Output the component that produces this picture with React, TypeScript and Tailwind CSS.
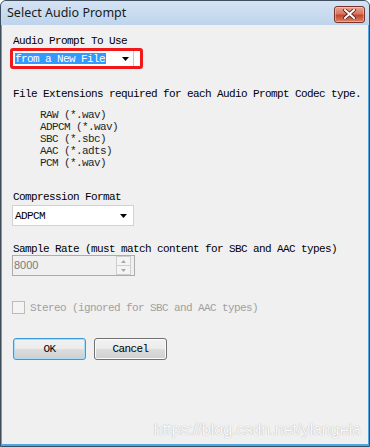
import React from "react";

const mono = "font-['Liberation_Mono',monospace] text-[11px] tracking-[-0.6px] leading-[12px]";

function DownArrow() {
  return (
    <svg width="7" height="4" viewBox="0 0 7 4" className="shrink-0">
      <path d="M0 0h7L3.5 4z" fill="#000" />
    </svg>
  );
}

function CloseButton() {
  return (
    <div className="flex h-[17px] w-[31px] items-center justify-center rounded-[3px] border border-[#7a3328] bg-[linear-gradient(#e8a393_0%,#d77560_45%,#c4452f_55%,#d9826a_100%)] shadow-[inset_0_0_0_1px_rgba(255,255,255,0.35)]">
      <svg width="13" height="10" viewBox="0 0 13 10">
        <path d="M2 1l9 8M11 1L2 9" stroke="#5a1c14" strokeWidth="3.6" strokeLinecap="square" />
        <path d="M2 1l9 8M11 1L2 9" stroke="#fff" strokeWidth="2" strokeLinecap="square" />
      </svg>
    </div>
  );
}

function Button({ label, primary }: { label: string; primary?: boolean }) {
  return (
    <div
      className={`flex h-[22px] w-[73px] items-center justify-center rounded-[3px] border bg-[linear-gradient(#f2f2f2_0%,#ebebeb_50%,#dddddd_50%,#cfcfcf_100%)] text-black ${mono} ${
        primary
          ? "border-[#3c9ad8] shadow-[inset_0_0_0_1px_#a9dcf6]"
          : "border-[#707070] shadow-[inset_0_0_0_1px_#fbfbfb]"
      }`}
    >
      {label}
    </div>
  );
}

export default function App() {
  return (
    <div className="flex h-[447px] w-[370px] flex-col overflow-hidden rounded-t-[6px] border border-[#3f4d5c] bg-[#4ba8e4]">
      {/* title bar */}
      <div className="flex h-[24px] shrink-0 items-center justify-between bg-[linear-gradient(#d4e3f4,#bed4ec)] pl-[6px] pr-[4px]">
        <span className="font-['Noto_Sans',sans-serif] text-[12.5px] text-[#1b1b1b]">Select Audio Prompt</span>
        <div className="mt-[2px]">
          <CloseButton />
        </div>
      </div>

      {/* client area */}
      <div className="relative mx-[1px] mb-[2px] flex flex-1 flex-col bg-[#f0f0f0] pl-[10px] text-black">
        <div className={`mt-[10px] ml-[1px] ${mono}`}>Audio Prompt To Use</div>

        <div className="mt-[1px] -ml-[2px] flex h-[21px] w-[133px] items-center rounded-[3px] border-[3px] border-[#f01818] bg-white">
          <span className={`ml-[2px] h-[11px] bg-[#3399ff] text-white ${mono} leading-[11px]`}>from a New File</span>
          <span className="h-[11px] w-[1px] bg-[#c8783a]" />
          <span className="flex-1" />
          <DownArrow />
          <span className="ml-[4px] h-full w-[1px] bg-[#b9c9dc]" />
          <span className="w-[6px]" />
        </div>

        <div className={`mt-[19px] ml-[1px] ${mono}`}>File Extensions required for each Audio Prompt Codec type.</div>

        <div className={`mt-[9px] ml-[28px] flex flex-col text-[#262626] ${mono}`}>
          <span>RAW (*.wav)</span>
          <span>ADPCM (*.wav)</span>
          <span>SBC (*.sbc)</span>
          <span>AAC (*.adts)</span>
          <span>PCM (*.wav)</span>
        </div>

        <div className={`mt-[22px] ml-[1px] ${mono}`}>Compression Format</div>

        <div className="mt-[2px] flex h-[21px] w-[122px] items-center border border-[#d2d2d2] bg-white pl-[2px] pr-[6px]">
          <span className={mono}>ADPCM</span>
          <span className="flex-1" />
          <DownArrow />
        </div>

        <div className={`mt-[17px] ml-[1px] ${mono}`}>Sample Rate (must match content for SBC and AAC types)</div>

        <div className="flex h-[21px] w-[123px] items-center border border-[#acacac] bg-[#f0f0f0] pl-[1px] pr-[3px]">
          <span className="font-['Liberation_Sans',sans-serif] text-[11px] text-[#7a7a7a]">8000</span>
          <span className="flex-1" />
          <div className="flex h-[19px] w-[15px] flex-col">
            <div className="flex flex-1 items-center justify-center border border-[#cfcfcf] bg-[#f4f4f4]">
              <svg width="5" height="3" viewBox="0 0 5 3"><path d="M0 3h5L2.5 0z" fill="#a8a8a8" /></svg>
            </div>
            <div className="flex flex-1 items-center justify-center border border-t-0 border-[#cfcfcf] bg-[#f4f4f4]">
              <svg width="5" height="3" viewBox="0 0 5 3"><path d="M0 0h5L2.5 3z" fill="#a8a8a8" /></svg>
            </div>
          </div>
        </div>

        <div className="mt-[25px] flex items-center">
          <div className="h-[13px] w-[13px] border border-[#bcbcbc] bg-[#f4f4f4]" />
          <span className={`ml-[5px] text-[#a0a0a0] ${mono}`}>Stereo (ignored for SBC and AAC types)</span>
        </div>

        <div className="mt-[24px] flex gap-[8px] pl-[1px]">
          <Button label="OK" primary />
          <Button label="Cancel" />
        </div>

        {/* watermark */}
        <span className="absolute right-[7px] bottom-[6px] font-['Liberation_Sans',sans-serif] text-[16px] leading-none text-[#fbfbfb] [text-shadow:0_0_1px_#9a9a9a]">
          https://blog.csdn.net/ylangeia
        </span>
      </div>
    </div>
  );
}
